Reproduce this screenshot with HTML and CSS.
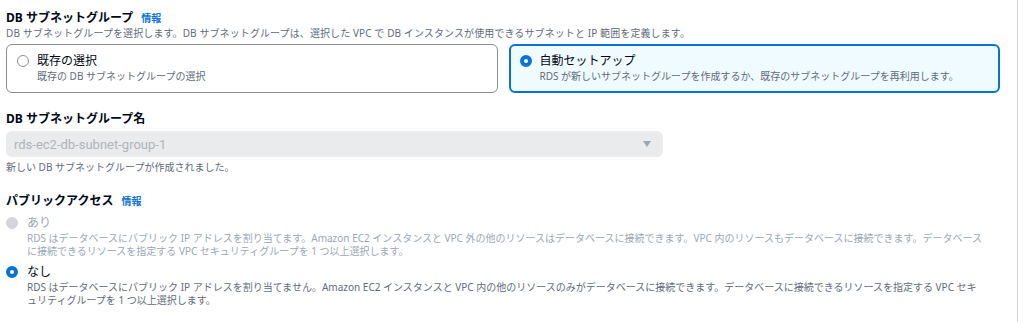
FILE: index.html
```html
<!DOCTYPE html>
<html lang="ja">
<head>
  <meta charset="UTF-8">
  <title>DB サブネットグループ</title>
  <link rel="stylesheet" href="styles.css">
</head>
<body>
  <div class="page">
    <div class="form">
      <section class="field">
        <div class="label">DB サブネットグループ <a class="info" href="#">情報</a></div>
        <p class="desc">DB サブネットグループを選択します。DB サブネットグループは、選択した VPC で DB インスタンスが使用できるサブネットと IP 範囲を定義します。</p>
        <div class="tiles">
          <div class="tile">
            <span class="radio"></span>
            <div>
              <div class="tile-title">既存の選択</div>
              <div class="tile-desc">既存の DB サブネットグループの選択</div>
            </div>
          </div>
          <div class="tile selected">
            <span class="radio checked"></span>
            <div>
              <div class="tile-title">自動セットアップ</div>
              <div class="tile-desc">RDS が新しいサブネットグループを作成するか、既存のサブネットグループを再利用します。</div>
            </div>
          </div>
        </div>
      </section>

      <section class="field">
        <div class="label">DB サブネットグループ名</div>
        <div class="select">
          <span>rds-ec2-db-subnet-group-1</span>
          <span class="caret"></span>
        </div>
        <p class="hint">新しい DB サブネットグループが作成されました。</p>
      </section>

      <section class="field">
        <div class="label">パブリックアクセス <a class="info" href="#">情報</a></div>
        <div class="option disabled">
          <span class="radio off"></span>
          <div>
            <div class="opt-title">あり</div>
            <div class="opt-desc">RDS はデータベースにパブリック IP アドレスを割り当てます。Amazon EC2 インスタンスと VPC 外の他のリソースはデータベースに接続できます。VPC 内のリソースもデータベースに接続できます。データベースに接続できるリソースを指定する VPC セキュリティグループを 1 つ以上選択します。</div>
          </div>
        </div>
        <div class="option">
          <span class="radio checked"></span>
          <div>
            <div class="opt-title">なし</div>
            <div class="opt-desc">RDS はデータベースにパブリック IP アドレスを割り当てません。Amazon EC2 インスタンスと VPC 内の他のリソースのみがデータベースに接続できます。データベースに接続できるリソースを指定する VPC セキュリティグループを 1 つ以上選択します。</div>
          </div>
        </div>
      </section>
    </div>
    <div class="rule"></div>
  </div>
</body>
</html>
```

FILE: styles.css
```css
body {
  margin: 0;
  font-family: "Noto Sans", "Noto Sans CJK JP", sans-serif;
  color: #000716;
  background: #fff;
}
.page {
  display: flex;
  height: 322px;
}
.form {
  width: 994px;
  padding: 10px 0 0 6px;
}
.rule {
  width: 1px;
  margin-left: 17px;
  background: #d5d5d9;
}
.field {
  margin-bottom: 18px;
}
.label {
  font-size: 12px;
  font-weight: bold;
  line-height: 16px;
}
.info {
  margin-left: 5px;
  font-size: 10px;
  color: #0972d3;
  text-decoration: none;
}
.desc,
.hint {
  margin: 0;
  font-size: 10px;
  line-height: 15px;
  color: #5f6b7a;
}
.desc {
  letter-spacing: 0.1px;
}
.hint {
  margin-top: 3px;
}
.tiles {
  display: flex;
  gap: 11px;
  margin-top: 3px;
}
.tile {
  flex: 1;
  display: flex;
  align-items: flex-start;
  gap: 8px;
  height: 49px;
  box-sizing: border-box;
  padding: 7px 10px;
  border: 1px solid #8c8c94;
  border-radius: 6px;
}
.tile.selected {
  border: 2px solid #0972d3;
  padding: 6px 9px;
  background: #f0fbff;
}
.tile .radio {
  margin-top: 3px;
}
.tile-title {
  font-size: 12px;
  line-height: 17px;
}
.tile-desc {
  font-size: 10px;
  line-height: 14px;
  color: #5f6b7a;
}
.radio {
  flex: none;
  width: 12px;
  height: 12px;
  box-sizing: border-box;
  border: 1px solid #8c8c94;
  border-radius: 50%;
  background: #fff;
}
.radio.checked {
  border: 4px solid #0972d3;
}
.radio.off {
  border-color: #d5d5d9;
  background: #d5d5d9;
}
.select {
  display: flex;
  justify-content: space-between;
  align-items: center;
  width: 657px;
  height: 26px;
  box-sizing: border-box;
  margin-top: 4px;
  padding: 0 12px 0 8px;
  border-radius: 6px;
  background: #e9ebed;
  font-family: Roboto, "Noto Sans CJK JP", sans-serif;
  font-size: 13px;
  color: #b0b4bb;
}
.caret {
  width: 0;
  height: 0;
  border-left: 4px solid transparent;
  border-right: 4px solid transparent;
  border-top: 6px solid #9ba7b6;
}
.option {
  display: flex;
  align-items: flex-start;
  gap: 9px;
  margin-top: 4px;
}
.option .radio {
  margin-top: 4px;
}
.opt-title {
  font-size: 12px;
  line-height: 19px;
}
.opt-desc {
  font-size: 10px;
  line-height: 13px;
  color: #5f6b7a;
  padding-right: 16px;
}
.disabled .opt-title,
.disabled .opt-desc {
  color: #9ba7b6;
}
```
